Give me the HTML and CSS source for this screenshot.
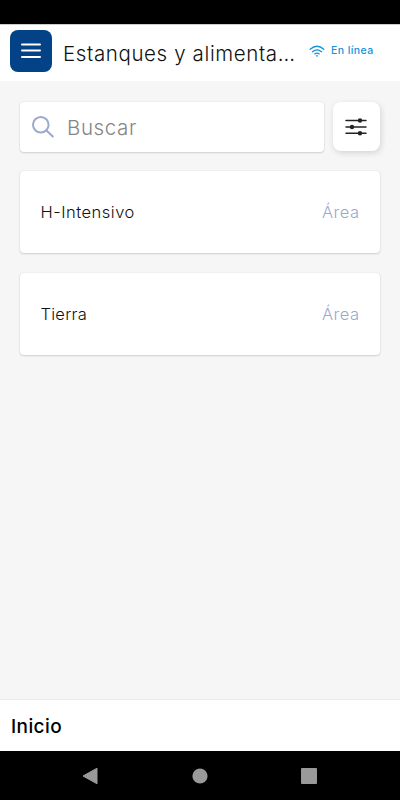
FILE: index.html
```html
<!DOCTYPE html>
<html lang="es">
<head>
<meta charset="utf-8">
<title>Estanques y alimentadores</title>
<link rel="stylesheet" href="styles.css">
</head>
<body>
<div class="status-bar"></div>
<header class="header">
  <button class="menu" aria-label="Menú">
    <svg width="20" height="16" viewBox="0 0 20 16"><path d="M1 1.4h18M1 7.6h18M1 14h18" stroke="#fff" stroke-width="2" stroke-linecap="round"/></svg>
  </button>
  <h1 class="title">Estanques y alimenta<span class="dots">...</span></h1>
  <div class="online">
    <svg width="16" height="12" viewBox="0 0 16 12" fill="none" stroke="#1593d8" stroke-width="1.3" stroke-linecap="round"><path d="M1.2 4.2Q8-1.8 14.8 4.2M3.5 6.7Q8 2.9 12.5 6.7M5.8 8.9Q8 7.2 10.2 8.9"/><circle cx="8" cy="10.8" r=".9" fill="#1593d8" stroke="none"/></svg>
    <span>En línea</span>
  </div>
</header>
<main class="content">
  <div class="toolbar">
    <div class="search">
      <svg width="22" height="22" viewBox="0 0 22 22" fill="none" stroke="#9aa9cd" stroke-width="2" stroke-linecap="round"><circle cx="8.8" cy="8.8" r="7.8"/><path d="M14.5 14.5l6.3 6"/></svg>
      <span>Buscar</span>
    </div>
    <button class="filter" aria-label="Filtros">
      <svg width="22" height="18" viewBox="0 0 22 18"><path d="M1 2.5h20M1 9h20M1 15.3h20" stroke="#222" stroke-width="1.5" stroke-linecap="round"/><g fill="#222"><circle cx="15" cy="2.5" r="2.2"/><circle cx="7" cy="9" r="2.2"/><circle cx="15" cy="15.3" r="2.2"/></g></svg>
    </button>
  </div>
  <div class="card"><span class="name intensive">H-Intensivo</span><span class="kind">Área</span></div>
  <div class="card"><span class="name">Tierra</span><span class="kind">Área</span></div>
</main>
<footer class="footer">Inicio</footer>
<nav class="system-nav">
  <svg width="16" height="18" viewBox="0 0 16 18"><path d="M1 9L15 1.2v15.6z" fill="#999" stroke="#999" stroke-linejoin="round"/></svg>
  <svg width="16" height="16" viewBox="0 0 16 16"><circle cx="8" cy="8" r="7.6" fill="#999"/></svg>
  <svg width="16" height="16" viewBox="0 0 16 16"><rect width="16" height="16" rx="1" fill="#999"/></svg>
</nav>
</body>
</html>
```
FILE: styles.css
```css
* { box-sizing: border-box; }
body {
  margin: 0;
  height: 800px;
  display: flex;
  flex-direction: column;
  overflow: hidden;
  background: #f6f6f6;
  color: #111;
  font-family: Inter, "Liberation Sans", sans-serif;
  font-weight: 300;
}
svg { display: block; flex: none; }
button { border: 0; padding: 0; display: flex; align-items: center; justify-content: center; }
span, h1 { white-space: nowrap; }
.status-bar { height: 24px; background: #000; }
.header {
  height: 57px;
  padding: 6px 0 0 10px;
  display: flex;
  align-items: flex-start;
  background: #fff;
  border-top: 1px solid #ccc;
}
.menu { width: 42px; height: 42px; margin-top: -1px; border-radius: 8px; background: #034287; }
.title { width: 233px; margin: 10px 0 0 11px; font-size: 20.5px; line-height: 26px; font-weight: 300; letter-spacing: 0.62px; }
.dots { letter-spacing: 0; }
.online {
  display: flex;
  align-items: center;
  gap: 6px;
  margin: 12px 0 0 13px;
  color: #1593d8;
  font-size: 10.5px;
  line-height: 16px;
  font-weight: 500;
  letter-spacing: 0.4px;
}
.content { flex: 1; padding: 20px 20px 0; }
.toolbar { display: flex; gap: 9px; margin-bottom: 19px; }
.search, .card { background: #fff; border-radius: 4px; box-shadow: 0 1px 2px rgba(0, 0, 0, .14), 0 0 2px rgba(0, 0, 0, .1); }
.search {
  width: 304px;
  height: 50px;
  margin-top: 1px;
  padding: 0 0 0 12px;
  display: flex;
  align-items: center;
  gap: 13px;
  color: #858585;
  font-size: 20.5px;
  letter-spacing: 0.6px;
}
.filter { width: 47px; height: 49px; margin-top: 1px; padding: 0 1px 0 0; border-radius: 8px; background: #fff; box-shadow: 1px 2px 6px rgba(0, 0, 0, .14); }
.card {
  height: 82px;
  margin-bottom: 20px;
  padding: 0 20.5px 1px;
  display: flex;
  align-items: center;
  justify-content: space-between;
  font-size: 16.5px;
  letter-spacing: 0.25px;
}
.intensive { letter-spacing: 0.5px; }
.kind { color: #9aa9cd; letter-spacing: 0.5px; }
.footer {
  height: 52px;
  padding: 3px 11px 0;
  background: #fff;
  border-top: 1px solid #eaeaea;
  color: #000;
  font-size: 19px;
  line-height: 48px;
  font-weight: 500;
  letter-spacing: 0.4px;
}
.system-nav {
  height: 49px;
  padding: 0 83px 0 82px;
  display: flex;
  justify-content: space-between;
  align-items: center;
  background: #000;
}
```
